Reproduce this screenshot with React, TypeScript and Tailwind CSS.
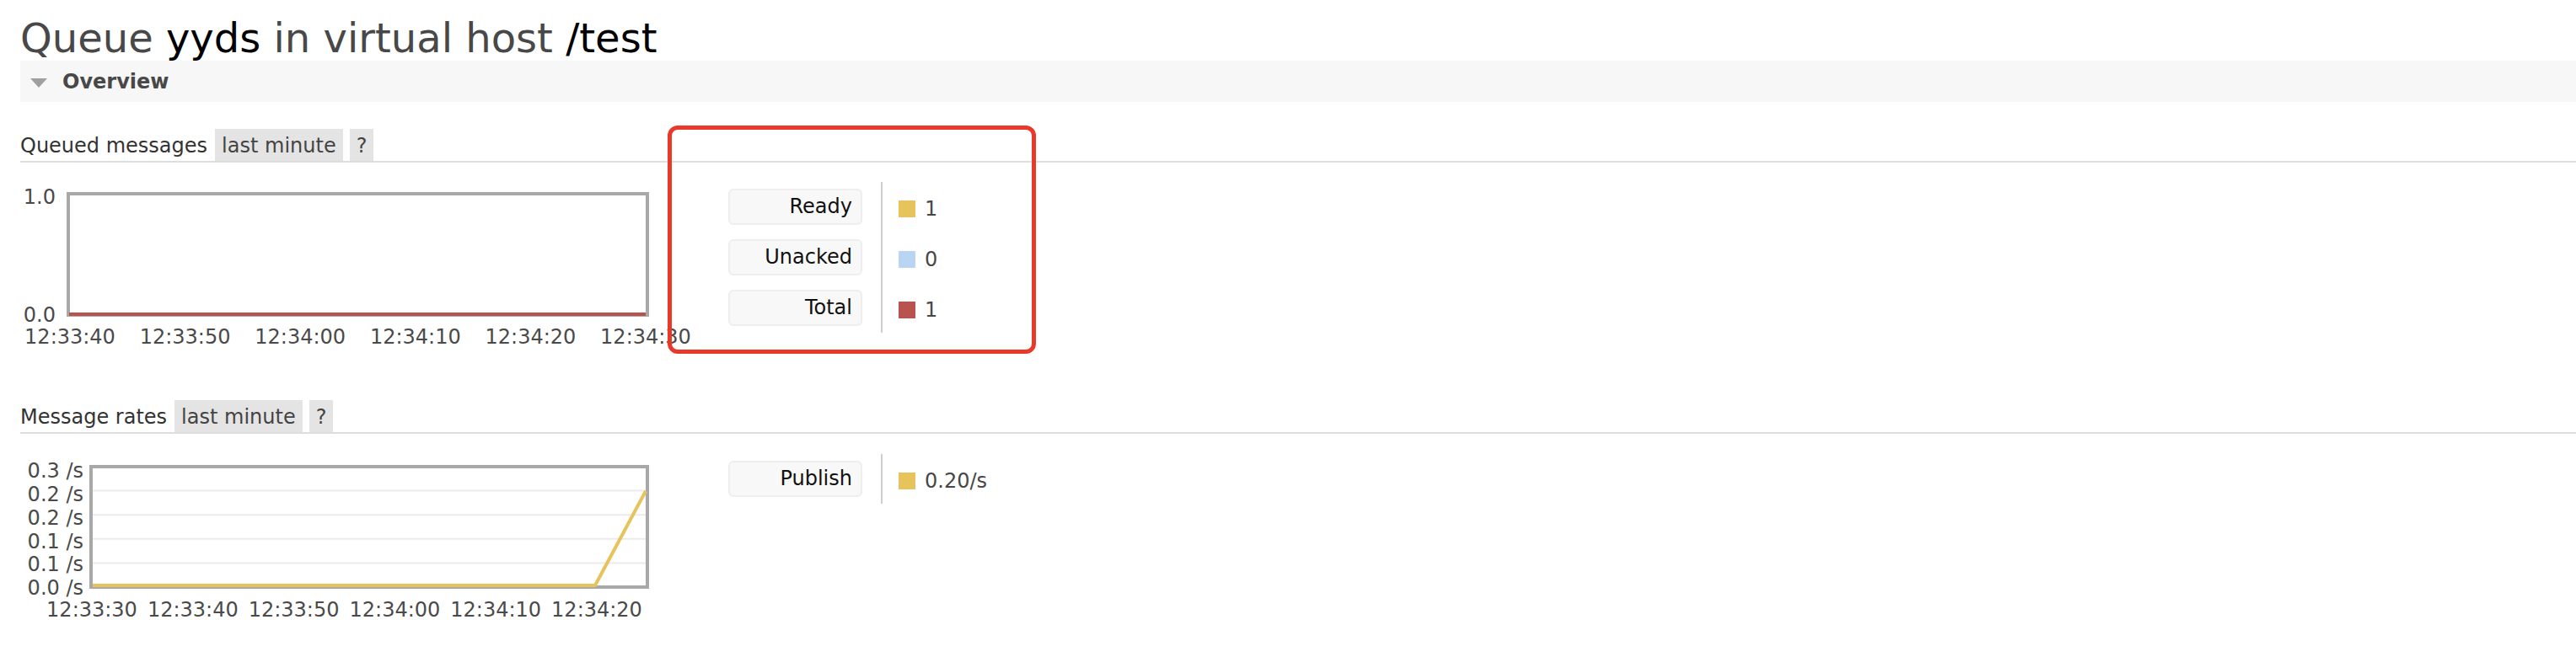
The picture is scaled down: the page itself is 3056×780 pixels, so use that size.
import React from "react";

type LegendRow = { label: string; swatch: string; value: string };

const queuedRows: LegendRow[] = [
  { label: "Ready", swatch: "bg-[#e7c35b]", value: "1" },
  { label: "Unacked", swatch: "bg-[#b8d6f4]", value: "0" },
  { label: "Total", swatch: "bg-[#b9534f]", value: "1" },
];

const rateRows: LegendRow[] = [{ label: "Publish", swatch: "bg-[#e7c35b]", value: "0.20/s" }];

function SectionHeading({ title }: { title: string }) {
  return (
    <div className="ml-[24px] flex h-[40px] gap-[8px] border-b-2 border-[#dddddd] text-[24px] text-[#333333]">
      <span className="mr-[1px] h-[38px] pt-[3px] leading-[35px]">{title}</span>
      <span className="h-[38px] bg-[#e4e4e4] px-[8px] pt-[3px] leading-[35px] text-[#444444]">last minute</span>
      <span className="h-[38px] bg-[#e4e4e4] px-[8px] pt-[3px] leading-[35px] text-[#444444]">?</span>
    </div>
  );
}

function Legend({ rows }: { rows: LegendRow[] }) {
  return (
    <div className="flex">
      <div className="flex flex-col gap-[17px] py-[8px] pr-[22px]">
        {rows.map((r) => (
          <div
            key={r.label}
            className="h-[43px] w-[159px] rounded-[6px] border-2 border-[#eeeeee] bg-[#f8f8f8] pr-[10px] text-right text-[24px] leading-[39px] text-[#111111]"
          >
            {r.label}
          </div>
        ))}
      </div>
      <div className="w-[2px] bg-[#cfcfcf]" />
      <div className="flex flex-col gap-[17px] py-[8px] pl-[19px]">
        {rows.map((r) => (
          <div key={r.label} className="flex h-[43px] items-center gap-[11px] pt-[5px] text-[24px] text-[#484848]">
            <span className={`size-[20px] ${r.swatch}`} />
            <span>{r.value}</span>
          </div>
        ))}
      </div>
    </div>
  );
}

const tickText = { fontSize: 24, fill: "#4a4a4a", fontFamily: "'DejaVu Sans', sans-serif" };

function QueuedChart() {
  const times = ["12:33:40", "12:33:50", "12:34:00", "12:34:10", "12:34:20", "12:34:30"];
  return (
    <svg width={800} height={227} className="shrink-0 overflow-visible">
      <rect x={57} y={37} width={687} height={144} fill="#fff" stroke="#a8a8a8" strokeWidth={4} />
      <line x1={58} y1={180} x2={742} y2={180} stroke="#b9534f" strokeWidth={4} />
      <text x={42} y={49} textAnchor="end" style={tickText}>1.0</text>
      <text x={42} y={189} textAnchor="end" style={tickText}>0.0</text>
      {times.map((t, i) => (
        <text key={t} x={59 + i * 136.6} y={215} textAnchor="middle" style={tickText}>
          {t}
        </text>
      ))}
    </svg>
  );
}

function RatesChart() {
  const times = ["12:33:30", "12:33:40", "12:33:50", "12:34:00", "12:34:10", "12:34:20"];
  const yLabels = ["0.3 /s", "0.2 /s", "0.2 /s", "0.1 /s", "0.1 /s", "0.0 /s"];
  const yBase = [52, 80, 108, 136, 163, 191];
  return (
    <svg width={800} height={230} className="shrink-0 overflow-visible">
      <rect x={84} y={39} width={660} height={143} fill="#fff" stroke="#a8a8a8" strokeWidth={4} />
      {[1, 2, 3, 4].map((k) => (
        <line key={k} x1={86} x2={742} y1={39 + 28.6 * k} y2={39 + 28.6 * k} stroke="#ebebeb" strokeWidth={2} />
      ))}
      <polyline points="86,180 682,180 742,68" fill="none" stroke="#e7c35b" strokeWidth={4} strokeLinejoin="round" />
      {yLabels.map((l, i) => (
        <text key={i} x={75} y={yBase[i]} textAnchor="end" style={tickText}>
          {l}
        </text>
      ))}
      {times.map((t, i) => (
        <text key={t} x={85 + i * 119.8} y={217} textAnchor="middle" style={tickText}>
          {t}
        </text>
      ))}
    </svg>
  );
}

export default function App() {
  return (
    <div className="relative h-[780px] w-[3056px] overflow-hidden bg-white font-['DejaVu_Sans',sans-serif]">
      <h1 className="h-[72px] pl-[24px] pt-[17px] text-[48px] leading-[56px] font-normal text-[#484848]">
        Queue <span className="text-black">yyds</span> in virtual host <span className="text-black">/test</span>
      </h1>

      <div className="ml-[24px] flex h-[49px] items-center bg-[#f7f7f7] pl-[12px]">
        <svg width={20} height={11} viewBox="0 0 20 11" className="mt-[3px]">
          <polygon points="0,0 20,0 10,11" fill="#a0a0a0" />
        </svg>
        <span className="ml-[18px] text-[24px] font-bold text-[#484848]">Overview</span>
      </div>

      <div className="mt-[32px]">
        <SectionHeading title="Queued messages" />
        <div className="ml-[24px] flex h-[227px]">
          <QueuedChart />
          <div className="ml-[40px] mt-[23px]">
            <Legend rows={queuedRows} />
          </div>
        </div>
      </div>

      <div className="mt-[55px]">
        <SectionHeading title="Message rates" />
        <div className="ml-[24px] flex h-[230px]">
          <RatesChart />
          <div className="ml-[40px] mt-[24px]">
            <Legend rows={rateRows} />
          </div>
        </div>
      </div>

      <div className="absolute left-[792px] top-[149px] h-[271px] w-[437px] rounded-[12px] border-[5px] border-[#e8392b]" />
    </div>
  );
}
